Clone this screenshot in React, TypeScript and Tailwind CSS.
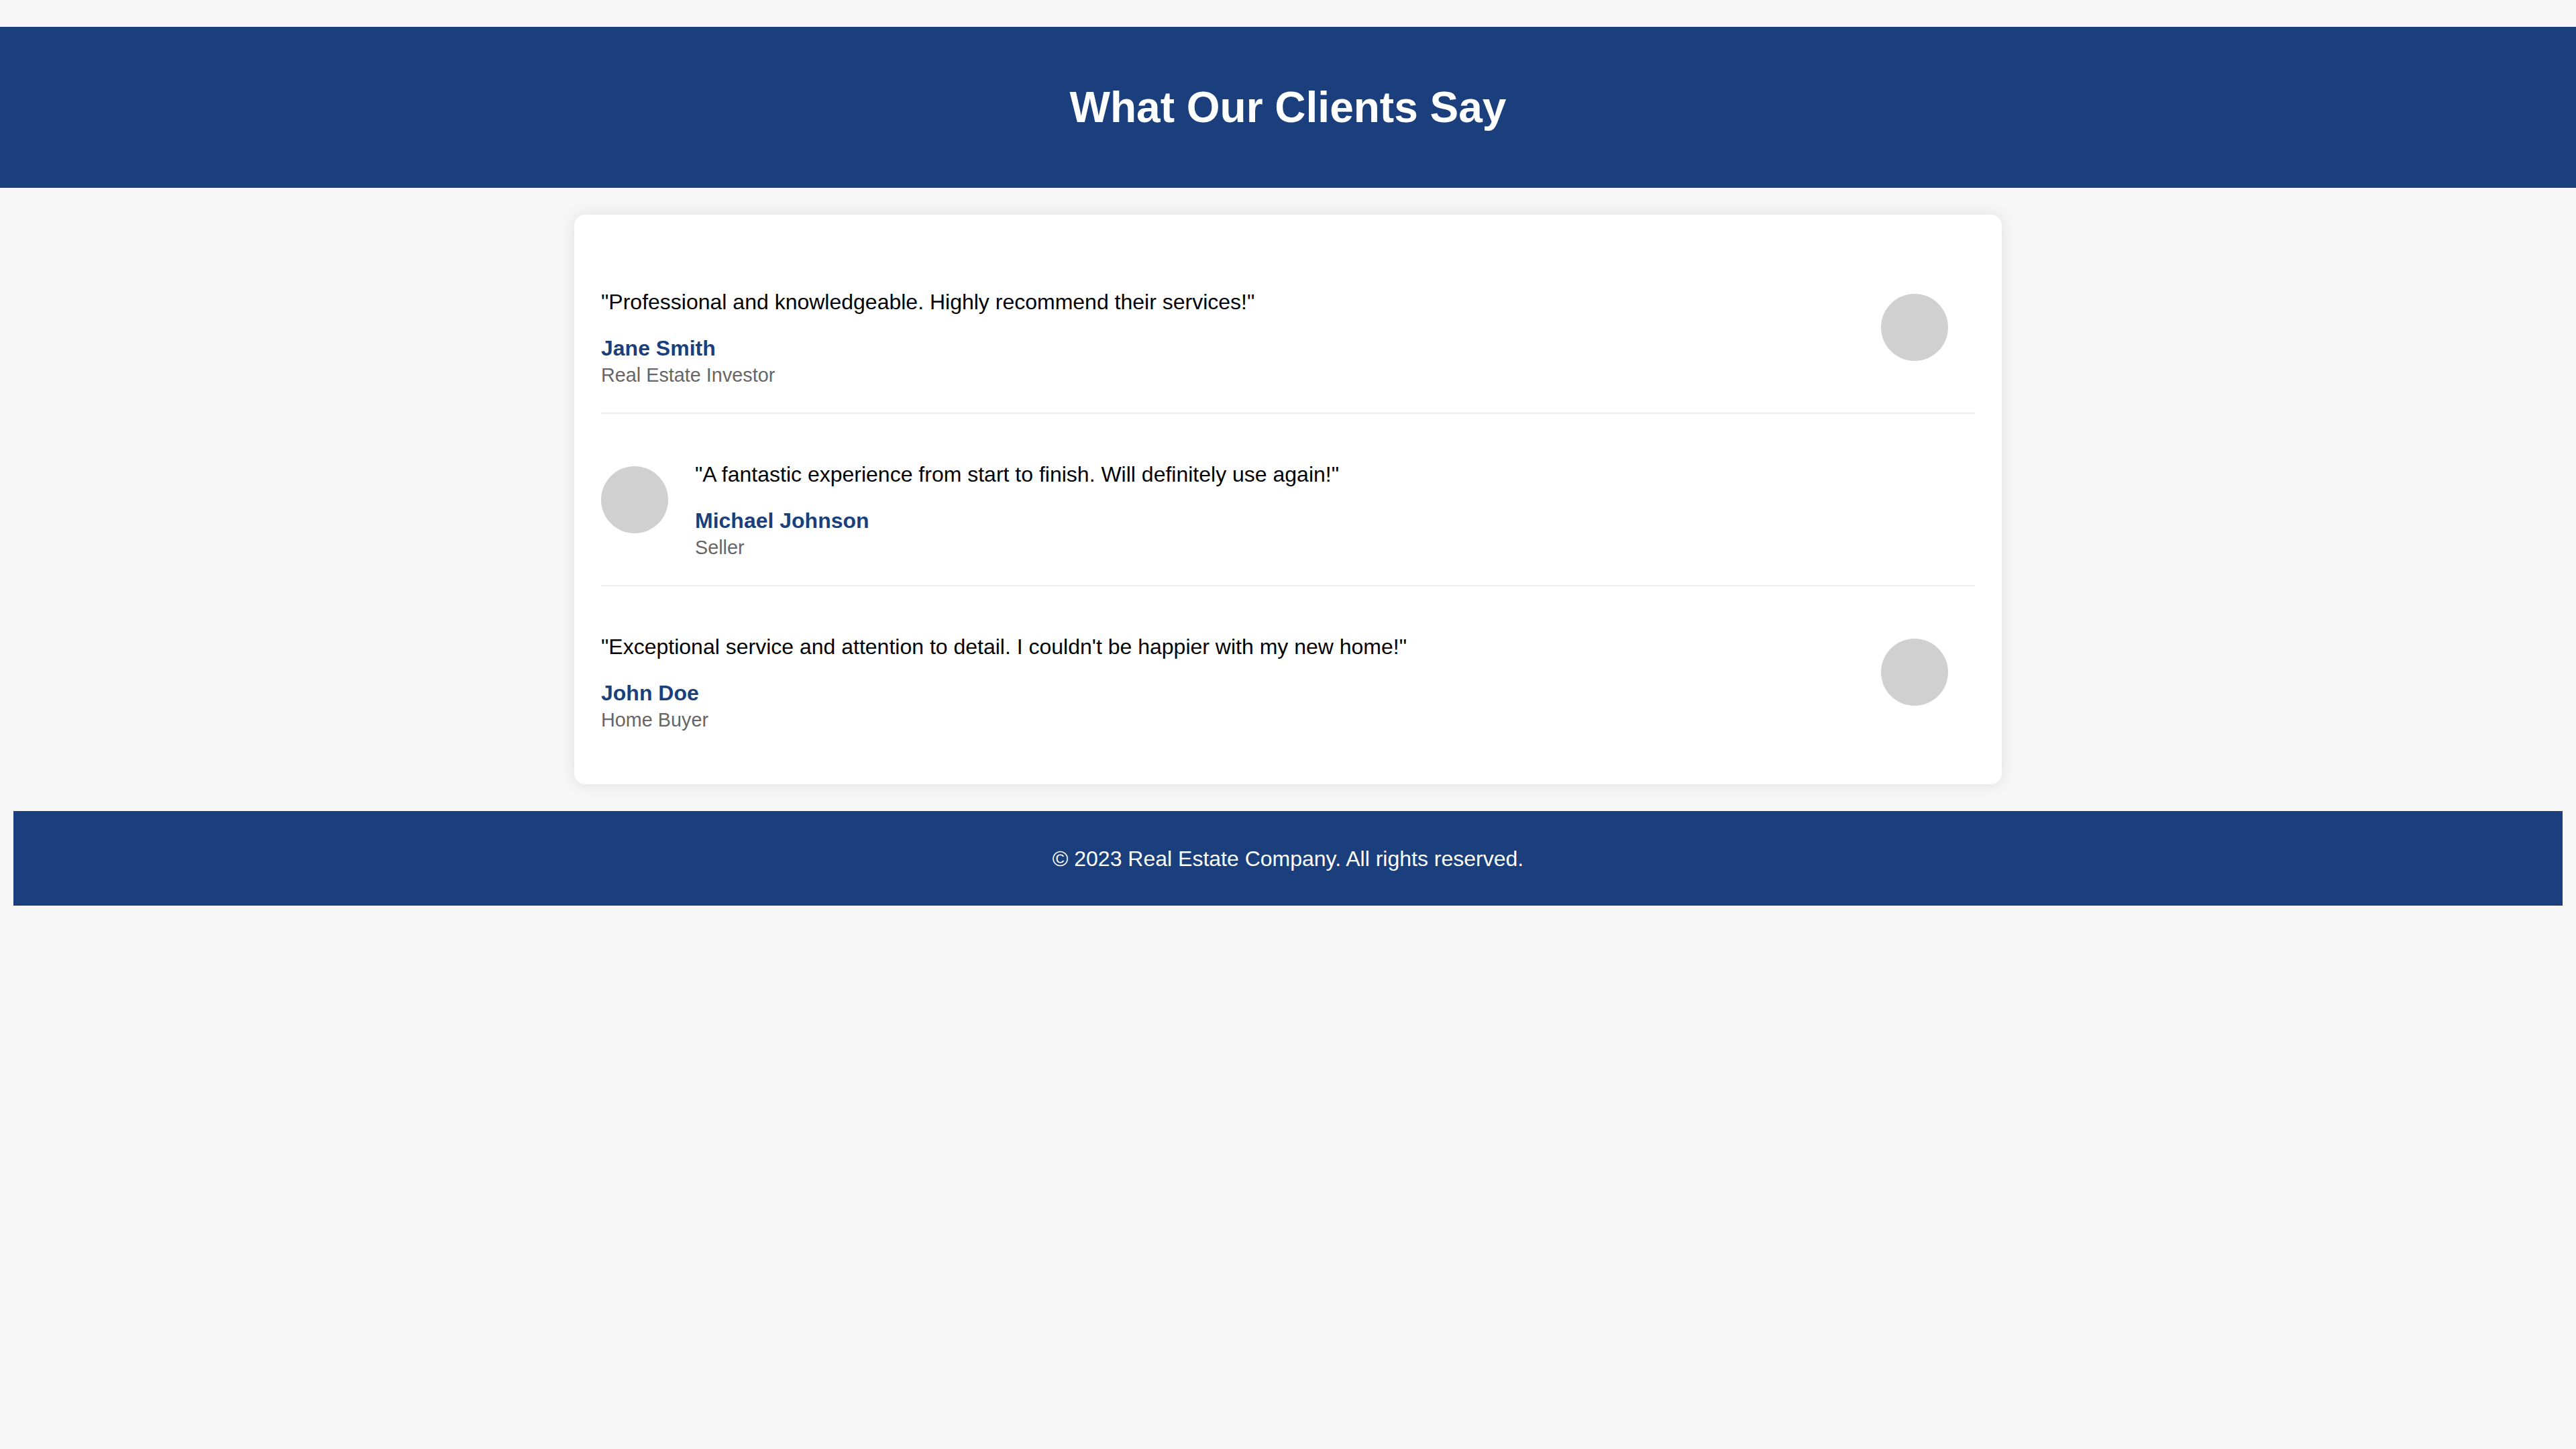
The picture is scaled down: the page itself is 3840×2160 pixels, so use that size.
import React from 'react';

type Testimonial = {
  quote: string;
  name: string;
  role: string;
  reverse: boolean;
};

const testimonials: Testimonial[] = [
  {
    quote: '"Professional and knowledgeable. Highly recommend their services!"',
    name: 'Jane Smith',
    role: 'Real Estate Investor',
    reverse: true,
  },
  {
    quote: '"A fantastic experience from start to finish. Will definitely use again!"',
    name: 'Michael Johnson',
    role: 'Seller',
    reverse: false,
  },
  {
    quote: '"Exceptional service and attention to detail. I couldn\'t be happier with my new home!"',
    name: 'John Doe',
    role: 'Home Buyer',
    reverse: true,
  },
];

const TestimonialRow: React.FC<{ item: Testimonial; last: boolean }> = ({ item, last }) => {
  return (
    <div
      className={`flex items-center py-[40px] ${item.reverse ? 'flex-row-reverse justify-between' : 'flex-row'} ${
        last ? '' : 'border-b-2 border-[#eeeeee]'
      }`}
    >
      <div className="w-[100px] h-[100px] rounded-full bg-[#d0d0d0] shrink-0 mr-[40px]" />
      <div>
        <p className="text-[32px] leading-[37px] text-black mt-[32px] mb-[32px]">{item.quote}</p>
        <h4 className="text-[32px] leading-[36px] font-bold text-[#1a3f7c] mb-[6px]">{item.name}</h4>
        <p className="text-[28.8px] leading-[32px] text-[#666666]">{item.role}</p>
      </div>
    </div>
  );
};

export default function App() {
  return (
    <div className="min-h-screen bg-[#f7f7f7] pt-[40px] font-['Liberation_Sans',Arial,sans-serif]">
      <header className="h-[240px] bg-[#1a3f7c] flex items-center justify-center">
        <h1 className="text-white text-[64px] font-bold">What Our Clients Say</h1>
      </header>

      <main className="py-[40px]">
        <div className="w-[2128px] mx-auto bg-white rounded-[16px] shadow-[0_0_24px_rgba(0,0,0,0.1)] p-[40px]">
          {testimonials.map((t, i) => (
            <TestimonialRow key={t.name} item={t} last={i === testimonials.length - 1} />
          ))}
        </div>
      </main>

      <footer className="mx-[20px] h-[141px] bg-[#1a3f7c] flex items-center justify-center">
        <p className="text-white text-[32px]">© 2023 Real Estate Company. All rights reserved.</p>
      </footer>
    </div>
  );
}
